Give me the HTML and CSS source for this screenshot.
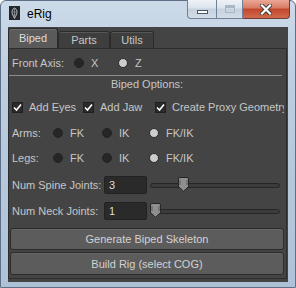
FILE: index.html
```html
<!DOCTYPE html>
<html lang="en">
<head>
  <meta charset="UTF-8">
  <title>eRig</title>
  <link rel="stylesheet" href="styles.css">
</head>
<body>
  <div class="window">
    <!-- title bar -->
    <div class="titlebar">
      <svg class="app_icon" width="11" height="14" viewBox="0 0 11 14">
        <rect width="11" height="14" fill="#23272b"/>
        <path d="M5.5 2 C3 3 2.5 6 3.5 8.5 C4 10 5 11.5 5.5 12.5 C6 11.5 7 10 7.5 8.5 C8.5 6 8 3 5.5 2 Z" fill="none" stroke="#c9ccce" stroke-width="0.9"/>
        <path d="M5.5 2.5 V12 M3.6 5.5 C4.5 6.5 6.5 6.5 7.4 5.5 M3.8 8.5 C4.8 9.3 6.2 9.3 7.2 8.5" fill="none" stroke="#9ea3a7" stroke-width="0.7"/>
      </svg>
      <span class="title">eRig</span>
      <div class="caption">
        <div class="cap min"><i></i></div>
        <div class="cap max"><i></i></div>
        <div class="cap close">
          <svg width="12" height="11" viewBox="0 0 12 11">
            <path d="M2 1.5 L10 9.5 M10 1.5 L2 9.5" stroke="#3a3a3a" stroke-width="4" stroke-linecap="square"/>
            <path d="M2 1.5 L10 9.5 M10 1.5 L2 9.5" stroke="#fff" stroke-width="2.2" stroke-linecap="square"/>
          </svg>
        </div>
      </div>
    </div>

    <div class="client">
      <!-- tabs -->
      <div class="tabs">
        <div class="tab active tab_biped">Biped</div>
        <div class="tab tab_parts">Parts</div>
        <div class="tab tab_utils">Utils</div>
      </div>

      <div class="panel">
        <div class="row axis_row">
          <span>Front Axis:</span>
          <label class="opt"><i class="radio"></i>X</label>
          <label class="opt"><i class="radio on"></i>Z</label>
        </div>
        <div class="sep"></div>
        <div class="heading">Biped Options:</div>

        <div class="row check_row">
          <label class="opt"><i class="check"><svg width="9" height="9" viewBox="0 0 9 9"><path d="M1 4.5 L3.5 7 L8 1.5" fill="none" stroke="#fff" stroke-width="1.6"/></svg></i>Add Eyes</label>
          <label class="opt"><i class="check"><svg width="9" height="9" viewBox="0 0 9 9"><path d="M1 4.5 L3.5 7 L8 1.5" fill="none" stroke="#fff" stroke-width="1.6"/></svg></i>Add Jaw</label>
          <label class="opt"><i class="check"><svg width="9" height="9" viewBox="0 0 9 9"><path d="M1 4.5 L3.5 7 L8 1.5" fill="none" stroke="#fff" stroke-width="1.6"/></svg></i>Create Proxy Geometry</label>
        </div>

        <div class="row limb_row arms">
          <span>Arms:</span>
          <label class="opt"><i class="radio"></i>FK</label>
          <label class="opt"><i class="radio"></i>IK</label>
          <label class="opt"><i class="radio on"></i>FK/IK</label>
        </div>
        <div class="row limb_row legs">
          <span>Legs:</span>
          <label class="opt"><i class="radio"></i>FK</label>
          <label class="opt"><i class="radio"></i>IK</label>
          <label class="opt"><i class="radio on"></i>FK/IK</label>
        </div>

        <div class="row field_row spine">
          <span class="field_label">Num Spine Joints:</span>
          <div class="num_input">3</div>
          <div class="slider">
            <div class="track"></div>
            <svg class="thumb" style="left: 28px" width="11" height="15" viewBox="0 0 11 15">
              <path d="M0.5 2 Q0.5 0.5 2 0.5 H9 Q10.5 0.5 10.5 2 V9.5 L5.5 14.3 L0.5 9.5 Z" fill="#8f8f8f" stroke="#262626"/>
              <path d="M2 3 V8 M9 3 V8" stroke="#5a5a5a" stroke-width="1"/>
            </svg>
          </div>
        </div>
        <div class="row field_row neck">
          <span class="field_label">Num Neck Joints:</span>
          <div class="num_input">1</div>
          <div class="slider">
            <div class="track"></div>
            <svg class="thumb" style="left: 0px" width="11" height="15" viewBox="0 0 11 15">
              <path d="M0.5 2 Q0.5 0.5 2 0.5 H9 Q10.5 0.5 10.5 2 V9.5 L5.5 14.3 L0.5 9.5 Z" fill="#8f8f8f" stroke="#262626"/>
              <path d="M2 3 V8 M9 3 V8" stroke="#5a5a5a" stroke-width="1"/>
            </svg>
          </div>
        </div>

        <button class="btn btn_generate">Generate Biped Skeleton</button>
        <button class="btn btn_build">Build Rig (select COG)</button>
      </div>
    </div>
  </div>
</body>
</html>
```

FILE: styles.css
```css
*{
  margin: 0;
  padding: 0;
  box-sizing: border-box;
}
i{
  font-style: normal;
}
body{
  width: 296px;
  height: 288px;
  overflow: hidden;
  font-family: "Liberation Sans", Arial, sans-serif;
  font-size: 11px;
  background: #fff;
}
/* window frame */
.window{
  display: flex;
  flex-direction: column;
  width: 296px;
  height: 288px;
  padding: 0 7px 5px 7px;
  background: linear-gradient(#ccdae9, #bccddf 30%, #aec2d7);
  border: 1px solid #5d7088;
  border-radius: 6px 6px 0 0;
}
.titlebar{
  display: flex;
  align-items: flex-start;
  height: 26px;
  flex-shrink: 0;
}
.app_icon{
  margin: 5px 0 0 1px;
}
.title{
  margin: 5px 0 0 7px;
  font-size: 12px;
  line-height: 16px;
  color: #000;
}
/* caption buttons */
.caption{
  display: flex;
  height: 19px;
  margin: -1px -2px 0 auto;
}
.cap{
  display: flex;
  align-items: center;
  justify-content: center;
  height: 19px;
  border: 1px solid #6f8299;
  border-top: 0;
}
.min, .max{
  background: linear-gradient(#eef2f7, #dbe3ec 45%, #c5d1de 50%, #d3dde8);
}
.min{
  width: 30px;
  border-radius: 0 0 0 4px;
}
.min i{
  width: 11px;
  height: 4px;
  margin-top: 5px;
  background: #fff;
  border: 1px solid #48566a;
}
.max{
  width: 26px;
  border-left: 0;
}
.max i{
  width: 10px;
  height: 8px;
  margin-top: -1px;
  border: 1px solid #a9b6c4;
  box-shadow: inset 0 2px 0 #a9b6c4;
}
.close{
  width: 47px;
  border-left: 0;
  border-color: #6d3d37;
  border-radius: 0 0 4px 0;
  background: linear-gradient(#e9a896, #d77a62 45%, #c2452b 50%, #d06a4d);
}
/* client area */
.client{
  flex: 1;
  display: flex;
  flex-direction: column;
  background: #444;
  color: #c6c6c6;
}
.tabs{
  display: flex;
  align-items: flex-end;
  height: 21px;
  flex-shrink: 0;
}
.tab{
  height: 17px;
  line-height: 16px;
  text-align: center;
  background: #3e3e3e;
  border: 1px solid #2b2b2b;
  border-bottom: 0;
  border-radius: 3px 3px 0 0;
  box-shadow: inset 0 1px 0 #575757;
}
.tab.active{
  height: 20px;
  line-height: 19px;
  background: #5a5a5a;
  color: #dcdcdc;
  box-shadow: inset 0 1px 0 #6e6e6e;
}
.tab_biped{
  width: 50px;
}
.tab_parts{
  width: 52px;
}
.tab_utils{
  width: 44px;
}
.panel{
  flex: 1;
  display: flex;
  flex-direction: column;
  margin: 0 1px 3px 0;
  padding: 4px 2px 0 1px;
  border: 1px solid #2d2d2d;
  overflow: hidden;
}
.row{
  display: grid;
  align-items: center;
  height: 22px;
  padding: 0 4px 0 2px;
  white-space: nowrap;
  overflow: hidden;
}
.opt{
  display: flex;
  align-items: center;
  gap: 7px;
}
.radio{
  width: 10px;
  height: 10px;
  border-radius: 50%;
  background: #262626;
  border: 1px solid #232323;
}
.radio.on{
  background: #cdcdcd;
  border-color: #2a2a2a;
}
.check{
  display: flex;
  align-items: center;
  justify-content: center;
  width: 11px;
  height: 11px;
  background: #2a2a2a;
  border: 1px solid #1f1f1f;
}
.axis_row{
  height: 20px;
  grid-template-columns: 62px 44px 1fr;
}
.sep{
  height: 1px;
  margin: 2px 2px 0 -1px;
  background: #8d8d8d;
  flex-shrink: 0;
}
.heading{
  height: 16px;
  line-height: 16px;
  text-align: center;
}
.check_row{
  margin-top: 4px;
  grid-template-columns: 71px 72px 1fr;
  padding-right: 0;
}
.check_row .opt{
  gap: 6px;
}
.limb_row{
  grid-template-columns: 41px 49px 47px 1fr;
}
.arms{
  margin-top: 4px;
}
.legs{
  margin-top: 3px;
}
.field_row{
  display: flex;
  height: 18px;
  overflow: visible;
}
.spine{
  margin-top: 7px;
}
.neck{
  margin-top: 8px;
}
.field_label{
  width: 92px;
  flex-shrink: 0;
}
.num_input{
  width: 43px;
  height: 18px;
  padding-left: 4px;
  line-height: 16px;
  color: #dadada;
  background: #2a2a2a;
  border: 1px solid #222;
  border-radius: 2px;
  flex-shrink: 0;
}
.slider{
  position: relative;
  width: 131px;
  height: 18px;
  margin-left: 3px;
  display: flex;
  align-items: center;
}
.track{
  width: 100%;
  height: 5px;
  background: #3b3b3b;
  border: 1px solid #262626;
  border-radius: 3px;
}
.thumb{
  position: absolute;
  top: 1px;
}
.btn{
  flex-shrink: 0;
  height: 22px;
  margin-top: 8px;
  font-family: inherit;
  font-size: 11px;
  color: #d2d2d2;
  background: #5c5c5c;
  border: 1px solid #2b2b2b;
  border-radius: 3px;
  box-shadow: inset 0 1px 0 #666;
  outline: none;
}
.btn_build{
  height: 23px;
  margin-top: 2px;
}
```
